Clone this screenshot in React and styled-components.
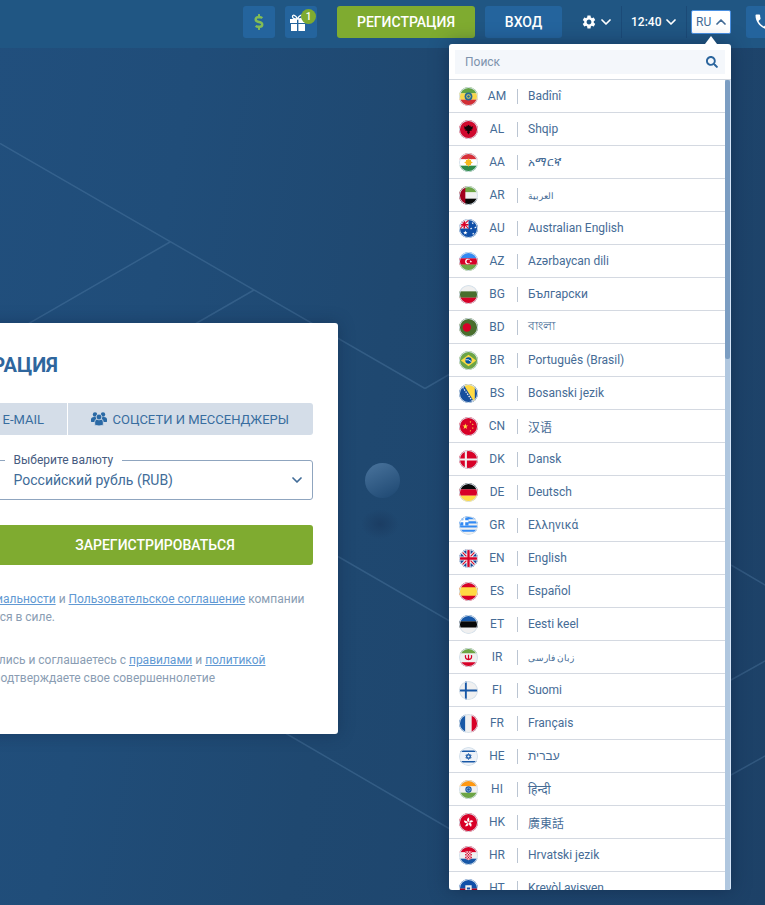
import React from "react";
import styled, { createGlobalStyle } from "styled-components";
import { FaDollarSign, FaSearch } from "react-icons/fa";
import { MdSettings, MdPhone } from "react-icons/md";

const Global = createGlobalStyle`
  *, *::before, *::after { box-sizing: border-box; }
  body { margin: 0; overflow: hidden; font-family: Roboto, "Noto Sans", "Noto Sans CJK SC", sans-serif; }
  svg { display: block; flex: none; }
`;

const Page = styled.div`
  position: relative;
  width: 765px;
  height: 905px;
  overflow: hidden;
  background: linear-gradient(100deg, #214f7d 0%, #204d79 22%, #1f4870 48%, #1e466e 68%, #1d4167 100%);
`;

const Backdrop = styled.svg`
  position: absolute;
  inset: 0;
`;

const Header = styled.header`
  position: relative;
  display: flex;
  align-items: center;
  height: 48px;
  padding: 0 0 4px 243px;
  background: #205683;
  color: #fff;
`;

const SquareButton = styled.button`
  position: relative;
  display: flex;
  align-items: center;
  justify-content: ${(p) => (p.$cut ? "flex-start" : "center")};
  flex: none;
  width: 32px;
  height: 32px;
  margin: 0 ${(p) => p.$right || 0}px 0 0;
  padding: 0 6px 0 ${(p) => p.$left ?? 6}px;
  border: 0;
  border-radius: 3px;
  background: #24649d;
  color: ${(p) => p.$color || "#fff"};
`;

const Badge = styled.span`
  position: absolute;
  top: 3px;
  right: 1px;
  width: 15px;
  height: 15px;
  border-radius: 50%;
  background: #7fab30;
  color: #fff;
  font: 500 10px/15px Roboto, sans-serif;
  text-align: center;
`;

const ActionButton = styled.button`
  flex: none;
  width: ${(p) => p.$width}px;
  height: 32px;
  margin-right: ${(p) => p.$right}px;
  padding: 0;
  border: 0;
  border-radius: 3px;
  background: ${(p) => (p.$green ? "#7fab30" : "#24649d")};
  color: #fff;
  font: 500 14px/32px Roboto, sans-serif;
`;

const HeaderMenu = styled.div`
  display: flex;
  align-items: center;
  flex: none;
  gap: ${(p) => p.$gap}px;
  width: ${(p) => p.$width}px;
  height: 32px;
  padding-left: ${(p) => p.$left}px;
  border-right: 1px solid #1b4a77;
  font-size: 12px;
  font-weight: 500;
`;

const LangButton = styled.button`
  display: flex;
  align-items: center;
  justify-content: space-between;
  flex: none;
  width: 40px;
  height: 24px;
  margin: 0 15px 0 4px;
  padding: 0 4px;
  border: 1px solid #4a90e2;
  border-radius: 2px;
  background: #fff;
  color: #416a95;
  font: 400 12px/22px Roboto, sans-serif;
`;

const Dropdown = styled.section`
  position: absolute;
  left: 449px;
  top: 44px;
  width: 282px;
  height: 846px;
  border-radius: 3px;
  background: #fff;
  box-shadow: 0 0 18px rgba(15, 35, 65, 0.55);
  &::before {
    content: "";
    position: absolute;
    right: 14px;
    top: -8px;
    border: 6px solid transparent;
    border-top: 0;
    border-bottom: 8px solid #fff;
  }
`;

const SearchBar = styled.div`
  height: 36px;
  padding: 6px 6px 5px 6px;
  border-bottom: 1px solid #d2d8e0;
`;

const SearchField = styled.div`
  display: flex;
  align-items: center;
  justify-content: space-between;
  height: 24px;
  padding: 0 7px 0 10px;
  background: #f4f7fb;
  color: #7d93ad;
  font-size: 12px;
`;

const ListArea = styled.div`
  display: flex;
  height: 810px;
  overflow: hidden;
  border-radius: 0 0 3px 3px;
`;

const List = styled.ul`
  width: 276px;
  height: 810px;
  margin: 0;
  padding: 0;
  overflow: hidden;
  list-style: none;
`;

const Track = styled.div`
  width: 6px;
  background: #b0c7df;
  border-right: 1px solid #d5e5f8;
`;

const Thumb = styled.div`
  height: 279px;
  border-radius: 2px;
  background: #7b9dc2;
`;

const LangRow = styled.li`
  display: flex;
  align-items: center;
  height: 33px;
  padding-left: 10px;
  border-bottom: 1px solid #d4d9e1;
  color: #466c96;
  font-size: 12px;
`;

const FlagIcon = styled.svg`
  width: 19px;
  height: 19px;
  border-radius: 50%;
  margin-top: 1px;
`;

const Code = styled.span`
  width: 39px;
  padding-right: 1px;
  text-align: center;
`;

const Name = styled.span`
  display: flex;
  align-items: center;
  height: 15px;
  padding-left: 10px;
  border-left: 1px solid #bbc5d2;
  font-size: ${(p) => (p.$small ? 9.4 : 12)}px;
  white-space: nowrap;
`;

const Card = styled.section`
  position: relative;
  width: 438px;
  height: 411px;
  margin: 275px 0 0 -100px;
  padding: 27px 25px 0;
  border-radius: 3px;
  background: #fff;
  box-shadow: 0 0 16px rgba(15, 35, 65, 0.4);
`;

const Title = styled.h1`
  width: 133px;
  margin: 0;
  color: #2f669d;
  font: 700 20px/30px Roboto, sans-serif;
  direction: rtl;
  white-space: nowrap;
`;

const Tabs = styled.div`
  display: flex;
  gap: 1px;
  margin-top: 23px;
  border-radius: 3px;
  overflow: hidden;
`;

const Tab = styled.div`
  display: flex;
  align-items: center;
  justify-content: flex-end;
  gap: 5px;
  width: ${(p) => p.$width}px;
  height: 32px;
  padding-right: ${(p) => p.$right}px;
  background: #d4dde8;
  color: #386d9f;
  font-size: 13px;
  white-space: nowrap;
`;

const CurrencyField = styled.fieldset`
  display: flex;
  align-items: center;
  justify-content: space-between;
  height: 47px;
  margin: 18px 0 0;
  padding: 0 10px 6px 87.5px;
  border: 1px solid #8fa5bf;
  border-radius: 3px;
  color: #416c98;
  font-size: 14px;
`;

const Legend = styled.legend`
  margin-left: -9px;
  padding: 0 9px;
  height: 14px;
  color: #465b80;
  font-size: 12px;
  line-height: 14px;
`;

const Submit = styled.button`
  display: block;
  width: 100%;
  height: 40px;
  margin-top: 25px;
  padding: 0 0 0 72px;
  border: 0;
  border-radius: 3px;
  background: #7fab30;
  color: #fff;
  font: 500 14px/40px Roboto, sans-serif;
`;

const Legal = styled.p`
  margin: ${(p) => p.$top}px 0 0;
  color: #8a9db3;
  font-size: 12px;
  line-height: 18px;
`;

const Line = styled.span`
  display: flex;
  justify-content: flex-end;
  width: ${(p) => p.$end + 75}px;
  white-space: nowrap;
`;

const Link = styled.a`
  color: #6199d3;
  text-decoration: underline;
`;

const Chevron = ({ up, size = 10, stroke = 1.7 }) => (
  <svg width={size} height={size * 0.6} viewBox="0 0 10 6" fill="none" stroke="currentColor" strokeWidth={stroke} strokeLinecap="round" strokeLinejoin="round">
    <path d={up ? "M1 5 5 1l4 4" : "m1 1 4 4 4-4"} />
  </svg>
);

const GiftIcon = () => (
  <svg width="16" height="17" viewBox="0 0 16 17" fill="currentColor">
    <path d="M0 5h7v4H0ZM8.4 5H16v4H8.4ZM1 10h6v7H1ZM8.4 10H15v7H8.4Z" />
    <path d="M7.5 5C5.5.2 2.4.6 2.5 2.7 2.6 4.4 5 5 7.5 5Zm0 0c2-4.8 5.1-4.4 5-2.3C12.4 4.4 10 5 7.5 5Z" fill="none" stroke="currentColor" strokeWidth="1.3" />
  </svg>
);

const PeopleIcon = () => (
  <svg width="16" height="14" viewBox="0 0 16 14" fill="#2a69a5">
    <circle cx="4" cy="2.5" r="2.2" />
    <circle cx="12" cy="2.5" r="2.2" />
    <path d="M0 9.8V7.6Q0 5 3 5h2v5H.8ZM16 9.8V7.6Q16 5 13 5h-2v5h4.2Z" />
    <g stroke="#d4dde8" strokeWidth=".8">
      <path d="M3.7 13.2V10q0-3 3-3h2.6q3 0 3 3v3.2Q8 14.6 3.7 13.2Z" />
      <circle cx="8" cy="5" r="2.9" />
    </g>
  </svg>
);

const H = ({ c }) => c.map((f, i) => <rect key={i} y={(18 / c.length) * i} width="18" height={18 / c.length + 0.1} fill={f} />);
const V = ({ c }) => c.map((f, i) => <rect key={i} x={(18 / c.length) * i} width={18 / c.length + 0.1} height="18" fill={f} />);
const STAR = "M0-1 .24-.32.95-.31.38.12.59.81 0 .4-.59.81-.38.12-.95-.31-.24-.32Z";
const Star = ({ x, y, s, f = "#fff" }) => <path d={STAR} transform={`translate(${x} ${y}) scale(${s})`} fill={f} />;
const Fill = ({ f }) => <rect width="18" height="18" fill={f} />;

const flags = {
  AM: <><H c={["#63a343", "#f8d64b", "#d22e35"]} /><circle cx="9" cy="9" r="3.7" fill="#23669a" /><circle cx="9" cy="9" r="2.1" fill="#d5cf62" /><circle cx="9" cy="9" r="1.2" fill="#23669a" /></>,
  AL: <><Fill f="#d0082d" /><path d="m9 4.5 1.2 1.2 1-.6-.2 1.5 2.5-.6-1 2 .8.5-1.7.6.6 1.2-1.7-.2-.7 1.3.8 1-1.1.1L9 14l-.5-1.5-1.1-.1.8-1-.7-1.3-1.7.2.6-1.2-1.7-.6.8-.5-1-2 2.5.6-.2-1.5 1 .6Z" fill="#120407" /></>,
  AA: <><H c={["#d8313a", "#fff", "#2d8b48"]} /><circle cx="9" cy="9" r="2.8" fill="#f4b81e" /><path d="M9 5.3v7.4M5.3 9h7.4M6.4 6.4l5.2 5.2m0-5.2-5.2 5.2" stroke="#f4b81e" strokeWidth=".9" /></>,
  AR: <><H c={["#6da544", "#f0f0f0", "#080808"]} /><rect width="6" height="18" fill="#a2001d" /></>,
  AU: <><Fill f="#0f4fa8" /><path d="M0 0h9v9H0Z" fill="#f0f0f0" /><path d="m1 1 8 8M9 1 1 9" stroke="#d80027" /><path d="M5 1v8M1 5.5h8" stroke="#d80027" strokeWidth="1.5" /><Star x={6} y={13} s={2.2} /><Star x={13} y={4} s={1.2} /><Star x={15.5} y={8} s={1.2} /><Star x={11.5} y={9} s={1.2} /><Star x={13.5} y={14} s={1.2} /></>,
  AZ: <><H c={["#338af3", "#d80027", "#6da544"]} /><circle cx="8.3" cy="9" r="2.5" fill="#fff" /><circle cx="9.1" cy="9" r="2" fill="#d80027" /><Star x={11.2} y={9} s={1.3} /></>,
  BG: <H c={["#f0f0f0", "#496e2d", "#d80027"]} />,
  BD: <><Fill f="#496e2d" /><circle cx="7.5" cy="9" r="4" fill="#d80027" /></>,
  BR: <><Fill f="#6da544" /><path d="m9 3.6 7.2 5.4L9 14.4 1.8 9Z" fill="#ffda44" /><circle cx="9" cy="9" r="3" fill="#0052a4" /><path d="M6.1 8.3q3-.8 5.7 1.8" stroke="#fff" fill="none" strokeWidth=".8" /></>,
  BS: <><Fill f="#164f9d" /><path d="M4 0h11v18Z" fill="#ffda44" /><path d="m2 1 12 17" stroke="#f0f0f0" strokeDasharray="1.4 1.1" strokeWidth="1.2" /></>,
  CN: <><Fill f="#d80027" /><Star x={6} y={9} s={2.8} f="#ffda44" /><Star x={10.8} y={4.7} s={1} f="#ffda44" /><Star x={13} y={7} s={1} f="#ffda44" /><Star x={13} y={10.6} s={1} f="#ffda44" /><Star x={10.8} y={13} s={1} f="#ffda44" /></>,
  DK: <><Fill f="#d80027" /><path d="M6.5 0v18M0 9h18" stroke="#f0f0f0" strokeWidth="2" /></>,
  DE: <H c={["#080808", "#d80027", "#ffda44"]} />,
  GR: <><Fill f="#f0f0f0" /><path d="M0 2h18M0 6h18M0 10h18M0 14h18" stroke="#338af3" strokeWidth="2" /><path d="M0 0h9v9H0Z" fill="#338af3" /><path d="M5 0v9M0 5h9" stroke="#fff" strokeWidth="1.8" /></>,
  EN: <><Fill f="#f0f0f0" /><path d="M7 0v5L3 1M11 0v5l4-4M0 7h5L1 3M18 7h-5l4-4M0 11h5l-4 4M18 11h-5l4 4M7 18v-5l-4 4M11 18v-5l4 4" fill="#15479a" /><path d="M9 0v18M0 9h18" stroke="#d80027" strokeWidth="2.2" /><path d="m3 3 4 4m4 4 4 4m0-12-4 4m-4 4-4 4" stroke="#d80027" /></>,
  ES: <><Fill f="#d80027" /><path d="M0 5h18v8H0Z" fill="#ffda44" /></>,
  ET: <H c={["#1658aa", "#080808", "#f0f0f0"]} />,
  IR: <><path d="M0 0h18v18H0Z" fill="#f0f0f0" /><path d="M0 0h18v5H0Z" fill="#6da544" /><path d="M0 13.5h18V18H0Z" fill="#d80027" /><path d="M6.2 6.8q-.8 4 2.8 4.1 3.6-.1 2.8-4.1M9 6.4v5.2" fill="none" stroke="#d80027" strokeWidth="1.2" /></>,
  FI: <><Fill f="#f0f0f0" /><path d="M6.5 0v18M0 9h18" stroke="#1757a6" strokeWidth="1.8" /></>,
  FR: <V c={["#1757a6", "#f0f0f0", "#d80027"]} />,
  HE: <><Fill f="#eef2f8" /><path d="M0 4h18M0 14h18" stroke="#1757a6" strokeWidth="1.6" /><path d="m9 6.2 2.5 4.2h-5Zm0 5.6 2.5-4.2h-5Z" fill="none" stroke="#1757a6" strokeWidth=".9" /></>,
  HI: <><H c={["#ff9811", "#f0f0f0", "#6da544"]} /><circle cx="9" cy="9" r="2.5" fill="#8fb2d8" stroke="#1757a6" /><circle cx="9" cy="9" r="1.2" fill="#1757a6" /></>,
  HK: <><Fill f="#d80027" />{[0, 72, 144, 216, 288].map((a) => <path key={a} d="M9 8.6C6.8 7 7.4 5 9.7 4.2 9 5.7 10.8 6.2 9 8.6Z" fill="#fff" transform={`rotate(${a} 9 9)`} />)}</>,
  HR: <><H c={["#d80027", "#f0f0f0", "#1757a6"]} /><path d="M5.7 5h6.6v5q-.5 3-3.3 3.4Q6.2 13 5.7 10Z" fill="#f0f0f0" /><path d="M6.5 5v7M9 5v8m2.5-8v7" stroke="#d80027" strokeWidth="1.3" strokeDasharray="1.3" /><path d="M7.8 6.3V13m2.5-6.7V13" stroke="#d80027" strokeWidth="1.2" strokeDasharray="1.3" /></>,
  HT: <><H c={["#0f4fa8", "#a2001d"]} /><path d="M6 6h6v6H6Z" fill="#f0f0f0" /><path d="M7.5 8h3v2h-3Z" fill="#0f4fa8" /></>,
};

const languages = [
  ["AM", "Badînî"], ["AL", "Shqip"], ["AA", "አማርኛ"], ["AR", "العربية"], ["AU", "Australian English"],
  ["AZ", "Azərbaycan dili"], ["BG", "Български"], ["BD", "বাংলা"], ["BR", "Português (Brasil)"], ["BS", "Bosanski jezik"],
  ["CN", "汉语"], ["DK", "Dansk"], ["DE", "Deutsch"], ["GR", "Ελληνικά"], ["EN", "English"], ["ES", "Español"],
  ["ET", "Eesti keel"], ["IR", "زبان فارسی"], ["FI", "Suomi"], ["FR", "Français"], ["HE", "עברית"],
  ["HI", "हिन्दी"], ["HK", "廣東話"], ["HR", "Hrvatski jezik"], ["HT", "Kreyòl ayisyen"],
];

const arabicScript = ["AR", "IR"];

export default function App() {
  return (
    <Page>
      <Global />
      <Backdrop width="765" height="905">
        <defs>
          <linearGradient id="ball" x1=".2" y1="0" x2=".7" y2="1">
            <stop stopColor="#47719a" />
            <stop offset="1" stopColor="#214b75" />
          </linearGradient>
          <radialGradient id="shade">
            <stop stopColor="#1b3d63" />
            <stop offset="1" stopColor="#1b3d63" stopOpacity="0" />
          </radialGradient>
        </defs>
        <path d="M0 143.5 425 388.5M170 242 0 340M254 290 150 350M425 388.5 500 345M338 556.5 560 684.7M280 730 480 846.5M731 565 765 585M731 680 765 661M731 775 765 756" fill="none" stroke="#6f9cc5" strokeOpacity=".25" strokeWidth="1.5" />
        <circle cx="382.5" cy="480.5" r="17.5" fill="url(#ball)" />
        <ellipse cx="380" cy="524" rx="19" ry="15" fill="url(#shade)" />
      </Backdrop>
      <Header>
        <SquareButton $right={10} $color="#83bd55"><FaDollarSign size={16} /></SquareButton>
        <SquareButton $right={20} $cut $left={5}>
          <GiftIcon />
          <Badge>1</Badge>
        </SquareButton>
        <ActionButton $green $width={138} $right={10}>РЕГИСТРАЦИЯ</ActionButton>
        <ActionButton $width={77} $right={0}>ВХОД</ActionButton>
        <HeaderMenu $width={60} $left={19} $gap={4}><MdSettings size={16} /><Chevron /></HeaderMenu>
        <HeaderMenu $width={65} $left={9} $gap={5}>12:40<Chevron /></HeaderMenu>
        <LangButton>RU<Chevron up /></LangButton>
        <SquareButton $cut $left={7}><MdPhone size={20} /></SquareButton>
      </Header>
      <Card>
        <Title>РЕГИСТРАЦИЯ</Title>
        <Tabs>
          <Tab $width={142} $right={23}>E-MAIL</Tab>
          <Tab $width={245} $right={24}><PeopleIcon />СОЦСЕТИ И МЕССЕНДЖЕРЫ</Tab>
        </Tabs>
        <CurrencyField>
          <Legend>Выберите валюту</Legend>
          Российский рубль (RUB)
          <Chevron />
        </CurrencyField>
        <Submit>ЗАРЕГИСТРИРОВАТЬСЯ</Submit>
        <Legal $top={25}>
          <Line $end={304.5}><span><Link>конфиденциальности</Link> и <Link>Пользовательское соглашение</Link> компании</span></Line>
          <Line $end={55}>остаются в силе.</Line>
        </Legal>
        <Legal $top={25}>
          <Line $end={265.5}><span>ознакомились и соглашаетесь с <Link>правилами</Link> и <Link>политикой</Link></span></Line>
          <Line $end={215}>подтверждаете свое совершеннолетие</Line>
        </Legal>
      </Card>
      <Dropdown>
        <SearchBar>
          <SearchField>Поиск<FaSearch size={12} color="#2b659d" /></SearchField>
        </SearchBar>
        <ListArea>
          <List>
            {languages.map(([code, name]) => (
              <LangRow key={code}>
                <FlagIcon viewBox="0 0 18 18">
                  {flags[code]}
                  <circle cx="9" cy="9" r="8.6" fill="none" stroke="#d6e2ec" strokeWidth="1" />
                </FlagIcon>
                <Code>{code}</Code>
                <Name $small={arabicScript.includes(code)}>{name}</Name>
              </LangRow>
            ))}
          </List>
          <Track><Thumb /></Track>
        </ListArea>
      </Dropdown>
    </Page>
  );
}
